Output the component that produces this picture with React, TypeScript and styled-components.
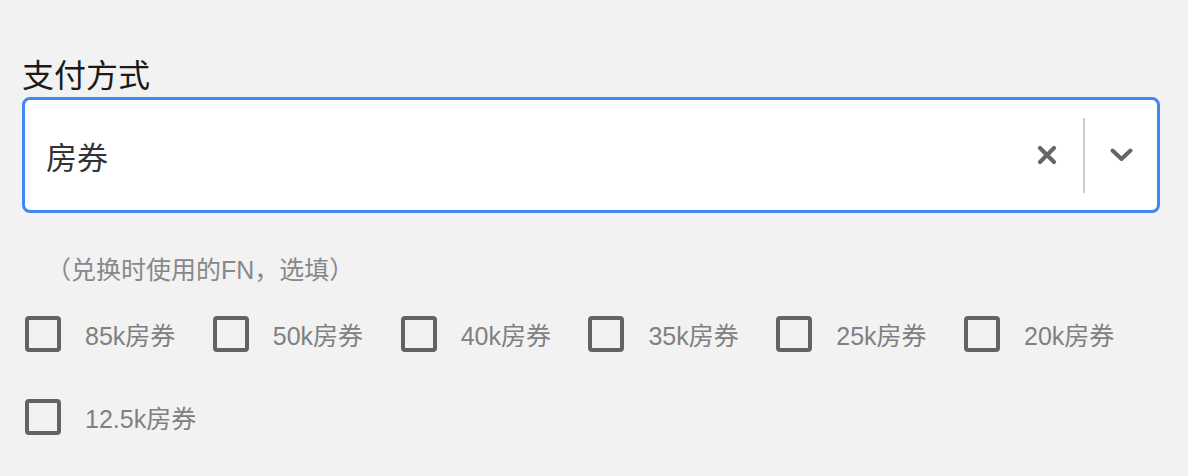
import React, { useState } from 'react';
import styled, { createGlobalStyle } from 'styled-components';

const GlobalStyle = createGlobalStyle`
  html, body {
    margin: 0;
    padding: 0;
    background: #f2f2f2;
    font-family: "Liberation Sans", "Noto Sans CJK SC", sans-serif;
  }
`;

const Page = styled.div`
  padding: 55px 28px 0 22px;
  width: 1138px;
`;

const FieldLabel = styled.div`
  font-size: 32px;
  line-height: 42px;
  color: #1a1a1a;
`;

const SelectBox = styled.div`
  box-sizing: border-box;
  height: 116px;
  display: flex;
  align-items: center;
  border: 3px solid #4285f4;
  border-radius: 8px;
  background: #fff;
  padding-left: 21px;
`;

const Value = styled.div`
  flex: 1;
  font-size: 31px;
  color: #333;
`;

const Indicators = styled.div`
  display: flex;
  align-items: center;
  height: 100%;
`;

const IconButton = styled.div<{ $w: number }>`
  width: ${p => p.$w}px;
  display: flex;
  align-items: center;
  justify-content: center;
  color: #666;
`;

const Divider = styled.span`
  width: 2px;
  height: 75px;
  background: #ccc;
  margin-left: 13px;
`;

const Hint = styled.div`
  margin-top: 40px;
  padding-left: 24px;
  font-size: 25px;
  line-height: 34px;
  color: #888;
`;

const Options = styled.div`
  margin-top: 29px;
  display: flex;
  flex-wrap: wrap;
  column-gap: 37.5px;
  row-gap: 47px;
  padding-left: 3px;
`;

const Option = styled.label`
  display: flex;
  align-items: center;
  gap: 24px;
  font-size: 25px;
  color: #808080;
  cursor: pointer;
`;

const Box = styled.span<{ $checked: boolean }>`
  box-sizing: border-box;
  width: 36px;
  height: 36px;
  border: 4px solid #636363;
  border-radius: 4px;
  background: ${p => (p.$checked ? '#636363' : 'transparent')};
`;

const options = ['85k房券', '50k房券', '40k房券', '35k房券', '25k房券', '20k房券', '12.5k房券'];

export default function App() {
  const [checked, setChecked] = useState<string[]>([]);
  const toggle = (o: string) =>
    setChecked(c => (c.includes(o) ? c.filter(x => x !== o) : [...c, o]));

  return (
    <Page>
      <GlobalStyle />
      <FieldLabel>支付方式</FieldLabel>
      <SelectBox>
        <Value>房券</Value>
        <Indicators>
          <IconButton $w={46}>
            <svg width="20" height="20" viewBox="0 0 20 20">
              <path d="M3 3L17 17M17 3L3 17" stroke="currentColor" strokeWidth="4.2" strokeLinecap="round" />
            </svg>
          </IconButton>
          <Divider />
          <IconButton $w={72}>
            <svg width="23" height="14" viewBox="0 0 23 14">
              <path d="M2.5 2.5L11.5 11L20.5 2.5" stroke="currentColor" strokeWidth="4" strokeLinecap="round" strokeLinejoin="round" fill="none" />
            </svg>
          </IconButton>
        </Indicators>
      </SelectBox>
      <Hint>（兑换时使用的FN，选填）</Hint>
      <Options>
        {options.map(o => (
          <Option key={o} onClick={() => toggle(o)}>
            <Box $checked={checked.includes(o)} />
            {o}
          </Option>
        ))}
      </Options>
    </Page>
  );
}
